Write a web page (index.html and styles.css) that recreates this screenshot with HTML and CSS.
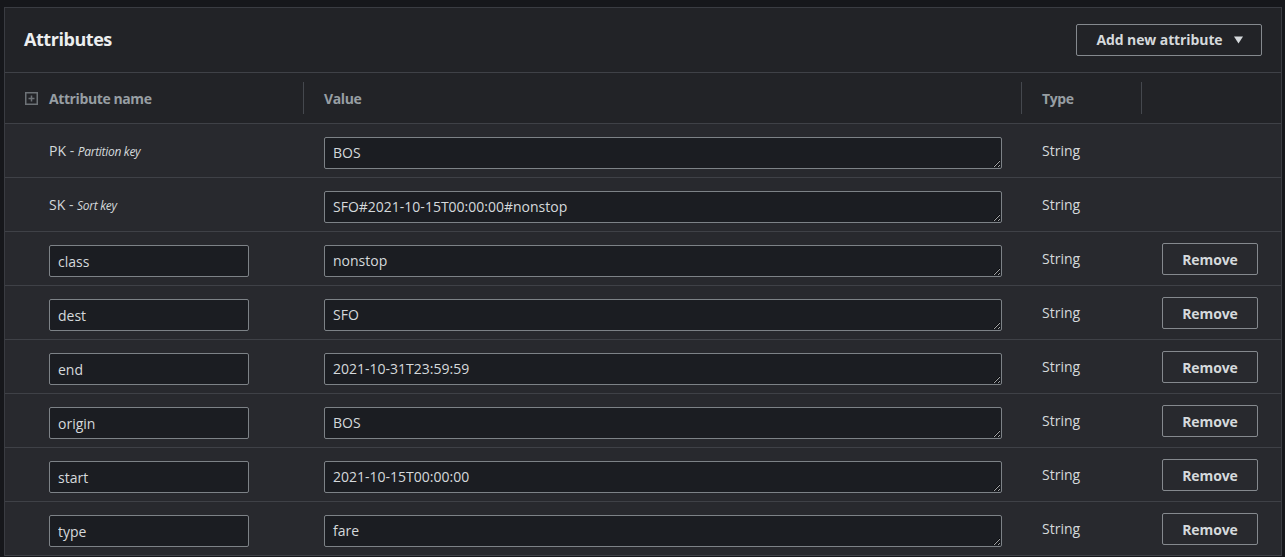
FILE: index.html
```html
<!DOCTYPE html>
<html lang="en">
<head>
<meta charset="utf-8">
<title>Attributes</title>
<link rel="stylesheet" href="styles.css">
</head>
<body>
<div class="panel">
  <div class="panel-header">
    <h2 class="title">Attributes</h2>
    <button class="btn btn-dropdown">Add new attribute
      <svg class="caret" width="9" height="8" viewBox="0 0 9 8"><path d="M0 0.5 H9 L4.5 7.5 Z" fill="currentColor"/></svg>
    </button>
  </div>
  <div class="grid head">
    <div class="hcell first">
      <svg class="plus" width="13" height="13" viewBox="0 0 13 13"><rect x="0.75" y="0.75" width="11.5" height="11.5" fill="none" stroke="currentColor" stroke-width="1.5"/><path d="M6.5 3.5 V9.5 M3.5 6.5 H9.5" stroke="currentColor" stroke-width="1.5"/></svg>
      <span>Attribute name</span>
    </div>
    <div class="hcell div">Value</div>
    <div class="hcell div">Type</div>
    <div class="hcell div"></div>
  </div>

  <div class="grid row">
    <div class="cell name text">PK<span class="dash"> - </span><em class="key">Partition key</em></div>
    <div class="cell value"><textarea class="ta">BOS</textarea></div>
    <div class="cell type text">String</div>
    <div class="cell action"></div>
  </div>
  <div class="grid row">
    <div class="cell name text">SK<span class="dash"> - </span><em class="key">Sort key</em></div>
    <div class="cell value"><textarea class="ta">SFO#2021-10-15T00:00:00#nonstop</textarea></div>
    <div class="cell type text">String</div>
    <div class="cell action"></div>
  </div>
  <div class="grid row">
    <div class="cell name"><input class="inp" value="class"></div>
    <div class="cell value"><textarea class="ta">nonstop</textarea></div>
    <div class="cell type text">String</div>
    <div class="cell action"><button class="btn btn-remove">Remove</button></div>
  </div>
  <div class="grid row">
    <div class="cell name"><input class="inp" value="dest"></div>
    <div class="cell value"><textarea class="ta">SFO</textarea></div>
    <div class="cell type text">String</div>
    <div class="cell action"><button class="btn btn-remove">Remove</button></div>
  </div>
  <div class="grid row">
    <div class="cell name"><input class="inp" value="end"></div>
    <div class="cell value"><textarea class="ta">2021-10-31T23:59:59</textarea></div>
    <div class="cell type text">String</div>
    <div class="cell action"><button class="btn btn-remove">Remove</button></div>
  </div>
  <div class="grid row">
    <div class="cell name"><input class="inp" value="origin"></div>
    <div class="cell value"><textarea class="ta">BOS</textarea></div>
    <div class="cell type text">String</div>
    <div class="cell action"><button class="btn btn-remove">Remove</button></div>
  </div>
  <div class="grid row">
    <div class="cell name"><input class="inp" value="start"></div>
    <div class="cell value"><textarea class="ta">2021-10-15T00:00:00</textarea></div>
    <div class="cell type text">String</div>
    <div class="cell action"><button class="btn btn-remove">Remove</button></div>
  </div>
  <div class="grid row">
    <div class="cell name"><input class="inp" value="type"></div>
    <div class="cell value"><textarea class="ta">fare</textarea></div>
    <div class="cell type text">String</div>
    <div class="cell action"><button class="btn btn-remove">Remove</button></div>
  </div>
</div>
</body>
</html>
```

FILE: styles.css
```css
* { box-sizing: border-box; }

html, body {
  margin: 0;
  padding: 0;
  background: #16171b;
  height: 100%;
  overflow: hidden;
}

body {
  font-family: "Open Sans", "Noto Sans", sans-serif;
  font-size: 14px;
  color: #d5d9dc;
}

.panel {
  margin: 7px 0 0 4px;
  width: 1278px;
  border: 1px solid #3a3c42;
  border-bottom: none;
  background: #28292e;
}

.panel-header {
  height: 65px;
  display: flex;
  align-items: center;
  justify-content: space-between;
  padding: 0 19px;
  background: #222327;
  border-bottom: 1px solid #3f4147;
}

.title {
  margin: 0;
  font-size: 18px;
  font-weight: 700;
  color: #eceeef;
  letter-spacing: -0.45px;
  padding-bottom: 2px;
}

.btn {
  font-family: inherit;
  font-size: 14px;
  font-weight: 700;
  color: #d5d9dc;
  background: transparent;
  border: 1px solid #85898e;
  border-radius: 2px;
  cursor: pointer;
  letter-spacing: -0.1px;
}

.btn-dropdown {
  width: 186px;
  height: 32px;
  display: flex;
  align-items: center;
  justify-content: center;
  gap: 11px;
  padding: 0 0 0 1px;
  margin-top: -1px;
}

.caret { display: block; }

.grid {
  display: grid;
  grid-template-columns: 298px 718px 120px 1fr;
}

.head {
  height: 51px;
  align-items: center;
  background: #222327;
  border-bottom: 1px solid #3f4147;
}

.hcell {
  height: 32px;
  display: flex;
  align-items: center;
  font-weight: 700;
  color: #979ea3;
  letter-spacing: -0.4px;
}

.hcell.first {
  padding-left: 20px;
  gap: 11px;
}

.plus { color: #6d7277; display: block; }

.hcell.div {
  border-left: 1px solid #45484e;
  padding-left: 20px;
}

.row {
  height: 54px;
  border-bottom: 1px solid #3f4147;
  align-items: start;
}

.cell {
  padding-top: 13px;
}

.cell.text {
  padding-top: 11px;
  line-height: 32px;
  white-space: nowrap;
}

.name { padding-left: 44px; }

.dash { color: #c9cdd0; }

.key {
  font-size: 12px;
  color: #d5d9dc;
  letter-spacing: -0.3px;
}

.value { padding-left: 21px; }

.type { padding-left: 21px; }

.action { padding-left: 21px; padding-top: 11px; }

.inp, .ta {
  display: block;
  font-family: inherit;
  font-size: 14px;
  color: #d5d9dc;
  background: #1b1d22;
  border: 1px solid #7d8287;
  border-radius: 2px;
  padding: 0 8px;
  height: 32px;
  outline: none;
  margin: 0;
}

.inp {
  width: 200px;
  line-height: 30px;
}

.ta {
  width: 678px;
  resize: vertical;
  line-height: 20px;
  padding-top: 5px;
  padding-bottom: 5px;
  overflow: hidden;
  color-scheme: dark;
}

.btn-remove {
  width: 96px;
  height: 32px;
  padding: 0;
}
```
